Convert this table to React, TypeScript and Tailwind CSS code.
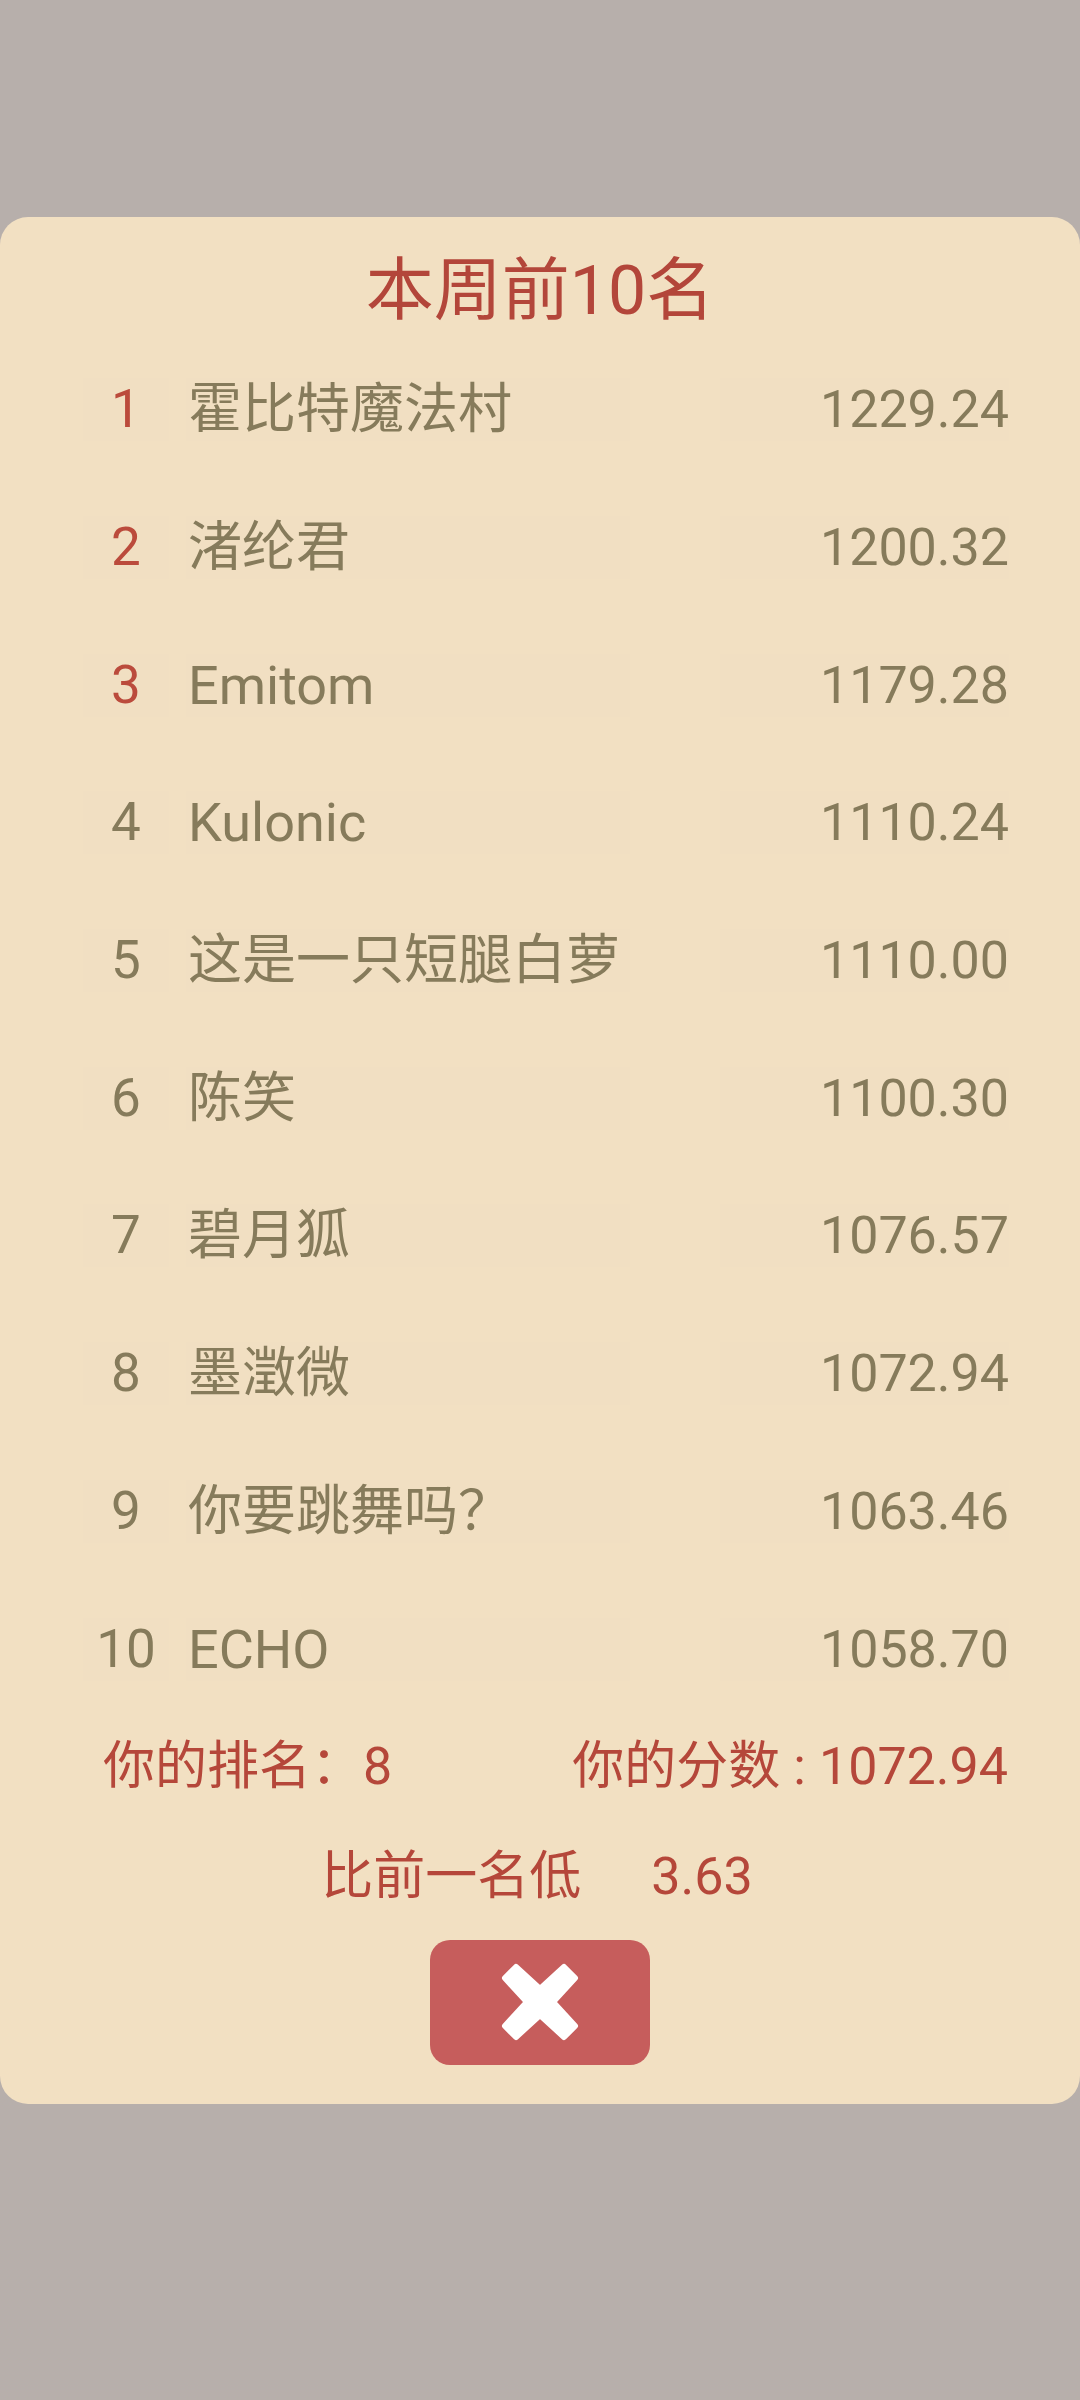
import React from 'react';

type Entry = { rank: number; name: string; score: string };

const entries: Entry[] = [
  { rank: 1, name: '霍比特魔法村', score: '1229.24' },
  { rank: 2, name: '渚纶君', score: '1200.32' },
  { rank: 3, name: 'Emitom', score: '1179.28' },
  { rank: 4, name: 'Kulonic', score: '1110.24' },
  { rank: 5, name: '这是一只短腿白萝', score: '1110.00' },
  { rank: 6, name: '陈笑', score: '1100.30' },
  { rank: 7, name: '碧月狐', score: '1076.57' },
  { rank: 8, name: '墨澂微', score: '1072.94' },
  { rank: 9, name: '你要跳舞吗？', score: '1063.46' },
  { rank: 10, name: 'ECHO', score: '1058.70' },
];

const FONT = { fontFamily: "Roboto, 'Noto Sans CJK SC', 'Noto Sans', sans-serif" };

const CloseIcon: React.FC = () => (
  <svg width="78" height="78" viewBox="0 0 78 78">
    <path
      d="M15 4 L39 26 L63 4 L74 15 L52 39 L74 63 L63 74 L39 52 L15 74 L4 63 L26 39 L4 15 Z"
      fill="#ffffff"
      stroke="#ffffff"
      strokeWidth="6"
      strokeLinejoin="round"
    />
  </svg>
);

const RankRow: React.FC<{ entry: Entry }> = ({ entry }) => {
  const top3 = entry.rank <= 3;
  return (
    <div className="flex h-[137.7px] items-center leading-[63px]">
      <div
        className={`ml-[83px] w-[86px] h-[63px] text-center text-[53px] bg-[#f1dfc2] ${top3 ? 'text-[#bb4b3c]' : 'text-[#867b5b]'}`}
      >
        {entry.rank}
      </div>
      <div className="ml-[17px] w-[444px] h-[63px] pl-[2px] whitespace-nowrap text-[54px] text-[#867b5b] bg-[#f1dfc2]">
        {entry.name}
      </div>
      <div className="ml-[90px] w-[289px] h-[63px] text-right text-[52px] text-[#867b5b] bg-[#f1dfc2]">
        {entry.score}
      </div>
    </div>
  );
};

export default function App() {
  return (
    <div className="w-[1080px] h-[2400px] bg-[#b7afab] pt-[217px]" style={FONT}>
      <div className="w-[1080px] h-[1887px] bg-[#f2e0c2] rounded-[28px] pt-[40px] flex flex-col">
        <h1 className="text-center text-[68px] leading-[68px] text-[#b3463a] font-normal mb-[16px]">
          本周前10名
        </h1>

        <div className="flex flex-col">
          {entries.map(e => (
            <RankRow key={e.rank} entry={e} />
          ))}
        </div>

        <div className="mt-[23px] flex justify-between pl-[103px] pr-[72px] text-[52px] leading-[52px] text-[#b5473a]">
          <span>你的排名：8</span>
          <span>
            你的分数<span className="mx-[13px]">:</span>1072.94
          </span>
        </div>

        <div className="mt-[58px] flex justify-center pr-[6px] text-[52px] leading-[52px] text-[#b5473a]">
          <span>比前一名低</span>
          <span className="ml-[70px]">3.63</span>
        </div>

        <div className="mt-[37px] flex justify-center">
          <button className="w-[220px] h-[125px] rounded-[20px] bg-[#c65d5c] flex items-center justify-center">
            <CloseIcon />
          </button>
        </div>
      </div>
    </div>
  );
}
